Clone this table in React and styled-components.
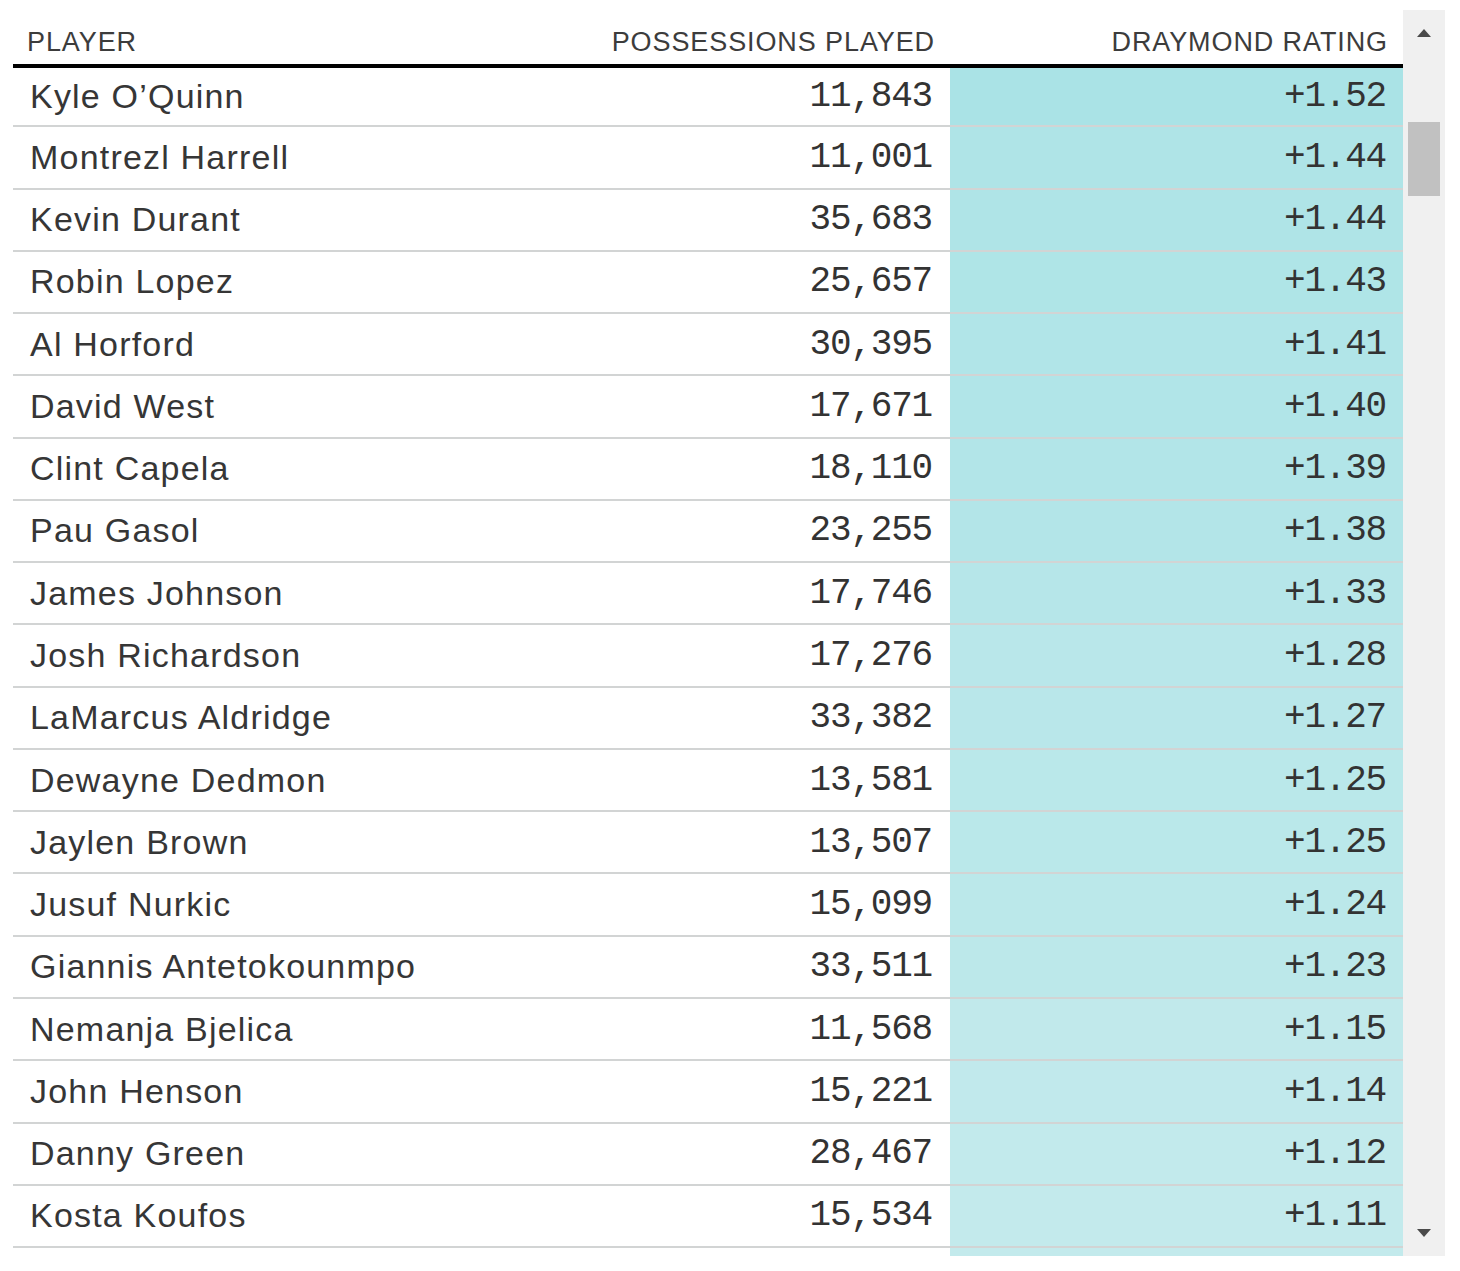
import React from "react";
import styled, { createGlobalStyle } from "styled-components";

const Global = createGlobalStyle`
  html, body { margin: 0; padding: 0; background: #ffffff; }
  body { font-family: "Liberation Sans", Arial, sans-serif; }
`;

const rows = [
  ["Kyle O\u2019Quinn", "11,843", 1.52],
  ["Montrezl Harrell", "11,001", 1.44],
  ["Kevin Durant", "35,683", 1.44],
  ["Robin Lopez", "25,657", 1.43],
  ["Al Horford", "30,395", 1.41],
  ["David West", "17,671", 1.4],
  ["Clint Capela", "18,110", 1.39],
  ["Pau Gasol", "23,255", 1.38],
  ["James Johnson", "17,746", 1.33],
  ["Josh Richardson", "17,276", 1.28],
  ["LaMarcus Aldridge", "33,382", 1.27],
  ["Dewayne Dedmon", "13,581", 1.25],
  ["Jaylen Brown", "13,507", 1.25],
  ["Jusuf Nurkic", "15,099", 1.24],
  ["Giannis Antetokounmpo", "33,511", 1.23],
  ["Nemanja Bjelica", "11,568", 1.15],
  ["John Henson", "15,221", 1.14],
  ["Danny Green", "28,467", 1.12],
  ["Kosta Koufos", "15,534", 1.11],
];

const hi = [170, 227, 230];
const lo = [195, 234, 236];
const shade = (v) => {
  const t = Math.max(0, Math.min(1, (1.52 - v) / (1.52 - 1.11)));
  const c = hi.map((h, i) => Math.round(h + (lo[i] - h) * t));
  return `rgb(${c[0]}, ${c[1]}, ${c[2]})`;
};

const Page = styled.div`
  display: flex;
  align-items: flex-start;
  padding-left: 13px;
  width: 1432px;
`;

const Table = styled.div`
  width: 1390px;
  display: flex;
  flex-direction: column;
`;

const cols = "577px 360px 453px";

const HeaderRow = styled.div`
  display: grid;
  grid-template-columns: ${cols};
  height: 68px;
  box-sizing: border-box;
  border-bottom: 4px solid #000;
  align-items: end;
`;

const HeadCell = styled.div`
  font-family: "Liberation Sans", Arial, sans-serif;
  font-size: 27px;
  line-height: 27px;
  letter-spacing: 0.9px;
  color: #3c3c3c;
  text-transform: uppercase;
  padding: 0 ${(p) => (p.$right ? "15px" : "0")} 8px ${(p) => (p.$right ? "0" : "14px")};
  text-align: ${(p) => (p.$right ? "right" : "left")};
  white-space: nowrap;
`;

const Row = styled.div`
  display: grid;
  grid-template-columns: ${cols};
  height: ${(p) => (p.$first ? "59.28px" : "62.28px")};
`;

const Cell = styled.div`
  box-sizing: border-box;
  display: flex;
  align-items: center;
  border-bottom: 2px solid #d2d4d4;
  background: ${(p) => p.$bg || "transparent"};
  justify-content: ${(p) => (p.$right ? "flex-end" : "flex-start")};
  padding: 0 ${(p) => (p.$pr ? p.$pr : "0")} 0 ${(p) => (p.$right ? "0" : "17px")};
`;

const Name = styled.span`
  font-family: "Liberation Sans", Arial, sans-serif;
  font-size: 34px;
  letter-spacing: 1.2px;
  color: #363636;
  white-space: nowrap;
`;

const Num = styled.span`
  font-family: "Liberation Mono", "DejaVu Sans Mono", monospace;
  font-size: 36px;
  letter-spacing: -1.2px;
  color: #333;
  white-space: nowrap;
`;

const Tail = styled.div`
  display: grid;
  grid-template-columns: ${cols};
  height: 8px;
`;

const TailFill = styled.div`
  grid-column: 3;
  background: ${(p) => p.$bg};
`;

const ScrollTrack = styled.div`
  margin-top: 10px;
  width: 42px;
  height: 1246px;
  background: #f0f0f0;
  display: flex;
  flex-direction: column;
  align-items: center;
`;

const Arrow = styled.svg`
  display: block;
  width: 16px;
  height: 10px;
`;

const Thumb = styled.div`
  margin-top: 84px;
  width: 32px;
  height: 74px;
  background: #c1c1c1;
`;

const Spacer = styled.div`
  flex: 1;
`;

const ArrowUp = styled.div`
  margin-top: 18px;
`;

const ArrowDown = styled.div`
  margin-bottom: 18px;
`;

export default function App() {
  return (
    <>
      <Global />
      <Page>
        <Table>
          <HeaderRow>
            <HeadCell>Player</HeadCell>
            <HeadCell $right>Possessions Played</HeadCell>
            <HeadCell $right>Draymond Rating</HeadCell>
          </HeaderRow>
          {rows.map(([name, poss, r], i) => (
            <Row key={name} $first={i === 0}>
              <Cell>
                <Name>{name}</Name>
              </Cell>
              <Cell $right $pr="18px">
                <Num>{poss}</Num>
              </Cell>
              <Cell $right $pr="17px" $bg={shade(r)}>
                <Num>+{r.toFixed(2)}</Num>
              </Cell>
            </Row>
          ))}
          <Tail>
            <TailFill $bg={shade(1.11)} />
          </Tail>
        </Table>
        <ScrollTrack>
          <ArrowUp>
            <Arrow viewBox="0 0 16 10">
              <path d="M1 9 L8 1 L15 9 Z" fill="#4a4a4a" />
            </Arrow>
          </ArrowUp>
          <Thumb />
          <Spacer />
          <ArrowDown>
            <Arrow viewBox="0 0 16 10">
              <path d="M1 1 L8 9 L15 1 Z" fill="#4a4a4a" />
            </Arrow>
          </ArrowDown>
        </ScrollTrack>
      </Page>
    </>
  );
}
